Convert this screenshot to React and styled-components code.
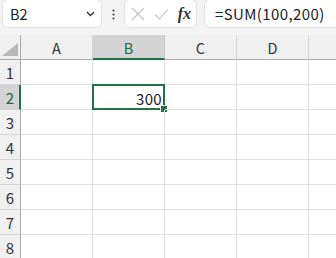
import React from 'react'
import styled, { createGlobalStyle } from 'styled-components'

const GlobalStyle = createGlobalStyle`
  html, body {
    margin: 0;
    padding: 0;
    background: #f3f3f3;
    overflow: hidden;
  }
  body {
    font-family: 'Noto Sans CJK JP', 'Noto Sans', sans-serif;
  }
`

const Page = styled.div`
  width: 336px;
  height: 258px;
  overflow: hidden;
  display: flex;
  flex-direction: column;
`

const Toolbar = styled.div`
  height: 30px;
  display: flex;
  align-items: flex-start;
  padding-left: 2px;
  margin-bottom: 6px;
`

const Field = styled.div`
  box-sizing: border-box;
  height: 29px;
  margin-top: -1px;
  background: #fff;
  border: 1px solid #e2e2e2;
  border-radius: 6px;
  display: flex;
  align-items: center;
  flex: none;
`

const NameBox = styled(Field)`
  width: 100px;
  padding: 0 6px 0 7px;
  justify-content: space-between;
  font-size: 14.5px;
  color: #222;
`

const Grip = styled.div`
  width: 22px;
  height: 29px;
  display: flex;
  align-items: center;
  justify-content: center;
`

const ButtonsBox = styled(Field)`
  width: 73px;
  padding: 0 5px 0 6px;
  justify-content: space-between;
`

const Fx = styled.span`
  font-family: 'Liberation Serif', 'DejaVu Serif', serif;
  font-style: italic;
  font-weight: bold;
  font-size: 16px;
  color: #333;
`

const FormulaBox = styled(Field)`
  margin-left: 7px;
  flex: 1;
  border-right: none;
  border-radius: 6px 0 0 6px;
  padding-left: 10px;
  font-size: 15px;
  letter-spacing: 0.4px;
  color: #222;
  white-space: nowrap;
`

const Sheet = styled.div`
  display: grid;
  grid-template-columns: 21px repeat(5, 72px);
  grid-auto-rows: 25px;
  background: #fff;
`

const Corner = styled.div`
  position: relative;
  box-sizing: border-box;
  background: #f0f0f0;
  border-right: 1px solid #ababab;
  border-bottom: 1px solid #ababab;
`

const CornerTriangle = styled.div`
  position: absolute;
  right: 2px;
  bottom: 3px;
  width: 0;
  height: 0;
  border-left: 16px solid transparent;
  border-bottom: 13px solid #b7b7b7;
`

const ColHead = styled.div`
  box-sizing: border-box;
  background: ${p => (p.$active ? '#d3d3d3' : '#f0f0f0')};
  color: ${p => (p.$active ? '#1e6b41' : '#333')};
  border-right: 1px solid ${p => (p.$active ? '#c4c4c4' : '#d6d6d6')};
  border-bottom: ${p => (p.$active ? '2px solid #217346' : '1px solid #ababab')};
  display: flex;
  align-items: center;
  justify-content: center;
  font-size: 14.5px;
  padding-top: ${p => (p.$active ? '1px' : '0')};
`

const RowHead = styled.div`
  box-sizing: border-box;
  background: ${p => (p.$active ? '#d3d3d3' : '#f0f0f0')};
  color: ${p => (p.$active ? '#1e6b41' : '#333')};
  border-right: ${p => (p.$active ? '2px solid #217346' : '1px solid #ababab')};
  border-bottom: 1px solid #d6d6d6;
  display: flex;
  align-items: center;
  justify-content: center;
  font-size: 15px;
  padding-left: ${p => (p.$active ? '1px' : '0')};
`

const Cell = styled.div`
  position: relative;
  box-sizing: border-box;
  border-right: 1px solid #e1e1e1;
  border-bottom: 1px solid #e1e1e1;
  display: flex;
  align-items: center;
  justify-content: flex-end;
  padding-right: 2px;
  font-size: 15px;
  color: #222;
`

const Selection = styled.div`
  position: absolute;
  left: -1px;
  top: -1px;
  right: -1px;
  bottom: -1px;
  border: 2px solid #217346;
  pointer-events: none;
`

const FillHandle = styled.div`
  position: absolute;
  right: -5px;
  bottom: -5px;
  width: 6px;
  height: 6px;
  background: #217346;
  border: 1px solid #fff;
`

const CellText = styled.span`
  position: relative;
  top: 1px;
  letter-spacing: 0.3px;
`

const columns = ['A', 'B', 'C', 'D', '']
const rows = [1, 2, 3, 4, 5, 6, 7, 8]

export default function App() {
  return (
    <Page>
      <GlobalStyle />
      <Toolbar>
        <NameBox>
          <span>B2</span>
          <svg width="9" height="6" viewBox="0 0 9 6">
            <path d="M1 1l3.5 3.5L8 1" fill="none" stroke="#333" strokeWidth="1.4" />
          </svg>
        </NameBox>
        <Grip>
          <svg width="3" height="11" viewBox="0 0 3 11">
            <circle cx="1.5" cy="1.5" r="1.1" fill="#444" />
            <circle cx="1.5" cy="5.5" r="1.1" fill="#444" />
            <circle cx="1.5" cy="9.5" r="1.1" fill="#444" />
          </svg>
        </Grip>
        <ButtonsBox>
          <svg width="14" height="14" viewBox="0 0 14 14">
            <path d="M1 1l12 12M13 1L1 13" stroke="#c4c4c4" strokeWidth="1.1" fill="none" />
          </svg>
          <svg width="15" height="12" viewBox="0 0 15 12">
            <path d="M1 6.5l4.5 4.5L14 1" stroke="#c4c4c4" strokeWidth="1.1" fill="none" />
          </svg>
          <Fx>fx</Fx>
        </ButtonsBox>
        <FormulaBox>=SUM(100,200)</FormulaBox>
      </Toolbar>
      <Sheet>
        <Corner>
          <CornerTriangle />
        </Corner>
        {columns.map((c, i) => (
          <ColHead key={i} $active={c === 'B'}>{c}</ColHead>
        ))}
        {rows.map(r => (
          <React.Fragment key={r}>
            <RowHead $active={r === 2}>{r}</RowHead>
            {columns.map((c, i) => (
              <Cell key={i}>
                {r === 2 && c === 'B' && (
                  <>
                    <CellText>300</CellText>
                    <Selection>
                      <FillHandle />
                    </Selection>
                  </>
                )}
              </Cell>
            ))}
          </React.Fragment>
        ))}
      </Sheet>
    </Page>
  )
}
